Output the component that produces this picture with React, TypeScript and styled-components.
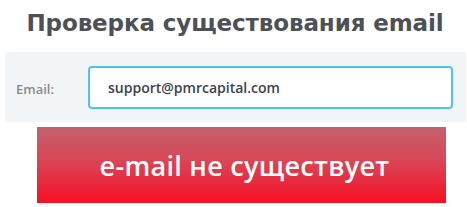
import React from 'react'
import styled, { createGlobalStyle } from 'styled-components'

const GlobalStyle = createGlobalStyle`
  body {
    margin: 0;
    background: #ffffff;
    font-family: "Open Sans", "DejaVu Sans", sans-serif;
  }
`

const Wrap = styled.div`
  width: 467px;
  height: 207px;
  display: flex;
  flex-direction: column;
  padding-top: 7px;
  box-sizing: border-box;
`

const Title = styled.h1`
  margin: 0;
  height: 45px;
  text-align: center;
  font-family: "DejaVu Sans", sans-serif;
  font-weight: 700;
  font-size: 23px;
  line-height: 32px;
  color: #4d5157;
  letter-spacing: -0.1px;
  padding-left: 3px;
`

const Panel = styled.div`
  margin-left: 5px;
  width: 461px;
  height: 70px;
  background: #f2f5f7;
  display: flex;
  align-items: center;
  box-sizing: border-box;
  padding: 0 13px 0 11px;
`

const Label = styled.label`
  width: 72px;
  flex-shrink: 0;
  font-size: 13px;
  font-weight: 600;
  color: #8a8a8a;
  padding-top: 3px;
`

const Input = styled.input`
  width: 365px;
  height: 43px;
  flex-shrink: 0;
  box-sizing: border-box;
  border: 2px solid #4fc3ef;
  border-radius: 4px;
  background: #fff;
  padding: 0 0 0 18px;
  font-family: "Open Sans", sans-serif;
  font-size: 14px;
  font-weight: 600;
  color: #3c4350;
  outline: none;
`

const Result = styled.div`
  margin: 5px 0 0 37px;
  width: 409px;
  height: 76px;
  display: flex;
  align-items: center;
  justify-content: center;
  background: linear-gradient(to bottom, #c3626d 0%, #d94556 45%, #f70f25 100%);
  color: #fff;
  font-family: "Open Sans", sans-serif;
  font-weight: 600;
  font-size: 27px;
  letter-spacing: 0.3px;
  padding-left: 6px;
  box-sizing: border-box;
`

const App: React.FC = () => {
    return (
        <>
            <GlobalStyle />
            <Wrap>
                <Title>Проверка существования email</Title>
                <Panel>
                    <Label htmlFor='email'>Email:</Label>
                    <Input id='email' type='text' defaultValue='support@pmrcapital.com' />
                </Panel>
                <Result>e-mail не существует</Result>
            </Wrap>
        </>
    )
}

export default App
